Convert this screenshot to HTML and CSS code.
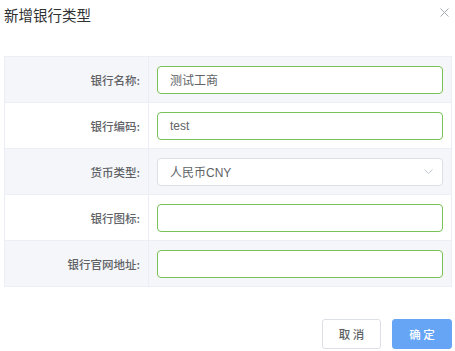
FILE: index.html
```html
<!DOCTYPE html>
<html lang="zh-CN">
<head>
  <meta charset="UTF-8" />
  <title>新增银行类型</title>
  <link rel="stylesheet" href="styles.css">
</head>
<body>
  <div class="dialog">
    <div class="dialog-header">
      <span class="dialog-title">新增银行类型</span>
      <span class="dialog-close">
        <svg width="9" height="9" viewBox="0 0 9 9"><path d="M0.5 0.5L8.5 8.5M8.5 0.5L0.5 8.5" stroke="#a8abb2" stroke-width="1" fill="none"/></svg>
      </span>
    </div>

    <div class="form-table">
      <div class="row odd">
        <div class="label">银行名称:</div>
        <div class="value"><div class="input active">测试工商</div></div>
      </div>
      <div class="row">
        <div class="label">银行编码:</div>
        <div class="value"><div class="input active">test</div></div>
      </div>
      <div class="row odd">
        <div class="label">货币类型:</div>
        <div class="value">
          <div class="input select">
            <span>人民币CNY</span>
            <svg class="arrow" width="9" height="5" viewBox="0 0 9 5"><path d="M0.5 0.5L4.5 4.5L8.5 0.5" stroke="#c0c4cc" stroke-width="1" fill="none"/></svg>
          </div>
        </div>
      </div>
      <div class="row">
        <div class="label">银行图标:</div>
        <div class="value"><div class="input active"></div></div>
      </div>
      <div class="row odd">
        <div class="label">银行官网地址:</div>
        <div class="value"><div class="input active"></div></div>
      </div>
    </div>

    <div class="dialog-footer">
      <button class="btn">取 消</button>
      <button class="btn primary">确 定</button>
    </div>
  </div>
</body>
</html>
```

FILE: styles.css
```css
body { margin: 0; font-family: "Liberation Sans", "Noto Sans CJK SC", sans-serif; color: #606266; background: #fff; }
.dialog { width: 455px; padding: 0 3px 0 4px; box-sizing: border-box; }
.dialog-header { height: 28px; display: flex; align-items: center; justify-content: space-between; }
.dialog-title { font-family: "Noto Sans CJK SC", sans-serif; font-size: 14.5px; color: #303133; }
.dialog-close { display: flex; margin-right: 3px; margin-top: -4px; }
.form-table { margin-top: 28px; border: 1px solid #ebeef5; border-top: none; }
.row { display: flex; height: 45px; border-top: 1px solid #ebeef5; background: #fff; }
.row.odd { background: #f5f6fa; }
.label { width: 135px; padding-right: 8px; border-right: 1px solid #ebeef5; display: flex; align-items: center; justify-content: flex-end; font-family: "Noto Sans CJK SC", sans-serif; font-size: 11.5px; font-weight: 500; color: #606266; }
.value { flex: 1; display: flex; align-items: center; padding: 0 8px 0 8px; }
.input { flex: 1; height: 26px; border: 1px solid #dcdfe6; border-radius: 4px; background: #fff; display: flex; align-items: center; padding: 0 12px; font-size: 12px; color: #606266; }
.input.active { border-color: #78c257; }
.select { justify-content: space-between; padding-right: 9px; }
.dialog-footer { display: flex; justify-content: flex-end; gap: 11px; margin-top: 32px; }
.btn { width: 59px; height: 30px; border: 1px solid #dcdfe6; border-radius: 3px; background: #fff; font-family: "Noto Sans CJK SC", sans-serif; font-size: 11.5px; font-weight: 500; color: #606266; padding: 0; }
.btn.primary { width: 60px; background: #66a4f6; border-color: #66a4f6; color: #fff; }
```
